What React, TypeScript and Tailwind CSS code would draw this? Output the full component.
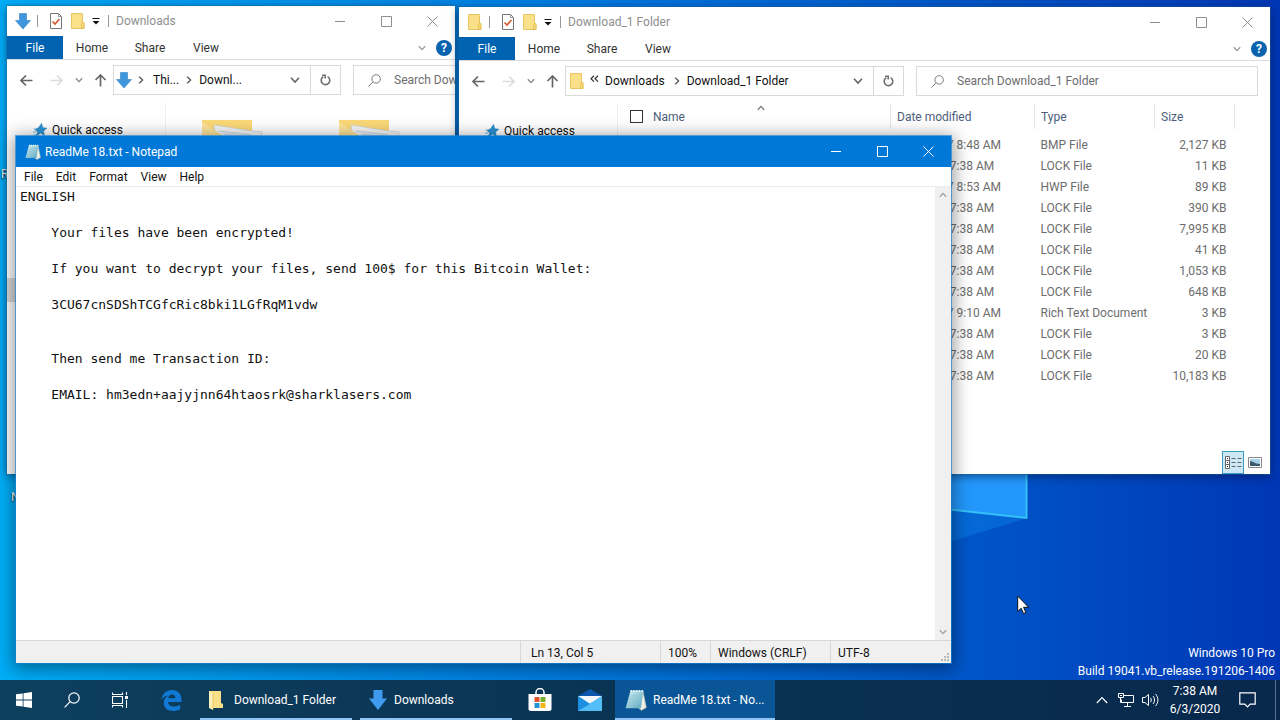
import type { ReactNode } from "react"

const files = [
  { date: "1/27/2017 8:48 AM", type: "BMP File", size: "2,127 KB" },
  { date: "6/3/2020 7:38 AM", type: "LOCK File", size: "11 KB" },
  { date: "1/27/2017 8:53 AM", type: "HWP File", size: "89 KB" },
  { date: "6/3/2020 7:38 AM", type: "LOCK File", size: "390 KB" },
  { date: "6/3/2020 7:38 AM", type: "LOCK File", size: "7,995 KB" },
  { date: "6/3/2020 7:38 AM", type: "LOCK File", size: "41 KB" },
  { date: "6/3/2020 7:38 AM", type: "LOCK File", size: "1,053 KB" },
  { date: "6/3/2020 7:38 AM", type: "LOCK File", size: "648 KB" },
  { date: "1/27/2017 9:10 AM", type: "Rich Text Document", size: "3 KB" },
  { date: "6/3/2020 7:38 AM", type: "LOCK File", size: "3 KB" },
  { date: "6/3/2020 7:38 AM", type: "LOCK File", size: "20 KB" },
  { date: "6/3/2020 7:38 AM", type: "LOCK File", size: "10,183 KB" },
]

const note = `ENGLISH

    Your files have been encrypted!

    If you want to decrypt your files, send 100$ for this Bitcoin Wallet:

    3CU67cnSDShTCGfcRic8bki1LGfRqM1vdw


    Then send me Transaction ID:

    EMAIL: hm3edn+aajyjnn64htaosrk@sharklasers.com`

const FolderIcon = () => (
  <svg width="14" height="16" viewBox="0 0 14 16">
    <path d="M.5.5h11v9l1.5.5v5.5H.5z" fill="#fbe08a" stroke="#e6c562" />
    <path d="M10.500 15v-4.500l1-1h1.500v6z" fill="#f8d775" stroke="#e0bb50" strokeWidth=".7" />
  </svg>
)

const DownIcon = () => (
  <svg width="16" height="17" viewBox="0 0 16 17">
    <path d="M4.500.5h7v7H15.500L8 16 .5 7.500h4z" fill="#3f96dc" stroke="#2f7fc4" strokeWidth=".6" />
  </svg>
)

const NotepadIcon = ({ className }: { className: string }) => (
  <svg className={className} viewBox="0 0 16 16">
    <defs>
      <linearGradient id="pad" x1="0" y1="0" x2="1" y2="1">
        <stop offset="0" stopColor="#d8f0f4" />
        <stop offset="1" stopColor="#58a6bc" />
      </linearGradient>
    </defs>
    <path d="M13 1.500 15.500 13.500 12 15.500 10 14z" fill="#eef0e6" stroke="#b9b9a5" strokeWidth=".5" />
    <path d="M4 1h9.500L11.500 14H.5z" fill="url(#pad)" />
    <path d="M4 1.500h9.500" stroke="#e9f6f6" strokeWidth="1.500" strokeDasharray="1 1" />
    <path d="M3.500 5h8.500M3 7.500h8.500M2.500 10h8.500" stroke="#8ec8d6" strokeWidth=".6" />
  </svg>
)

const Chevron = ({ className = "" }: { className?: string }) => (
  <svg className={className} width="8" height="8" viewBox="0 0 8 8" fill="none" stroke="currentColor" strokeWidth="1.300">
    <path d="M.8 2.200 4 5.600l3.200-3.400" />
  </svg>
)

const SearchIcon = ({ className }: { className: string }) => (
  <svg className={className} viewBox="0 0 16 16" fill="none" stroke="currentColor" strokeWidth="1.200">
    <circle cx="10" cy="6" r="5.200" />
    <path d="M6.200 9.700.6 15.400" />
  </svg>
)

const WindowButtons = () => (
  <div className="ml-auto flex h-full">
    <button aria-label="Minimize" className="flex w-[45px] items-center justify-center">
      <svg width="11" height="11" viewBox="0 0 11 11" stroke="currentColor"><path d="M0 5.500h10" /></svg>
    </button>
    <button aria-label="Maximize" className="flex w-[46px] items-center justify-center">
      <svg width="11" height="11" viewBox="0 0 11 11" fill="none" stroke="currentColor"><path d="M.5.5h10v10H.5z" /></svg>
    </button>
    <button aria-label="Close" className="flex w-[46px] items-center justify-center">
      <svg width="11" height="11" viewBox="0 0 11 11" stroke="currentColor"><path d="m.5.5 10 10m0-10-10 10" /></svg>
    </button>
  </div>
)

const Arrow = ({ className = "" }: { className?: string }) => (
  <svg className={className} width="13" height="13" viewBox="0 0 13 13" fill="none" stroke="currentColor" strokeWidth="1.700">
    <path d="M12.500 6.500H1.200M6 1.500l-5 5 5 5" />
  </svg>
)

type ExplorerProps = {
  title: string
  className: string
  icon: ReactNode
  crumbs: ReactNode
  search: string
  searchClass: string
  addressClass: string
  children: ReactNode
}

const Explorer = ({ title, className, icon, crumbs, search, searchClass, addressClass, children }: ExplorerProps) => (
  <section
    aria-label={title}
    className={`absolute flex flex-col overflow-hidden bg-white shadow-[0_0_0_1px_#1c6c9e66,0_2px_9px_#00143c99] ${className}`}
  >
    <header className="flex h-[30px] shrink-0 items-center pl-2 text-[#8e8e8e]">
      <span className="flex w-4 justify-center">{icon}</span>
      <span className="ml-1.5 h-3 w-px bg-[#999]" />
      <button aria-label="Properties" className="ml-3">
        <svg width="12" height="16" viewBox="0 0 12 16" fill="none">
          <path d="M.5.5h8l3 3v12H.5z" fill="#fff" stroke="#777" />
          <path d="M8.500.5v3h3" stroke="#999" />
          <path d="m2.500 8.500 2.500 2.500L9.500 6" stroke="#d4572c" strokeWidth="1.600" />
        </svg>
      </button>
      <button aria-label="New folder" className="ml-[9px]"><FolderIcon /></button>
      <button aria-label="Customize" className="ml-[7px] text-black">
        <svg width="8" height="7" viewBox="0 0 8 7"><path d="M.5.5h7" stroke="#111" /><path d="M.5 3h7L4 6.500z" fill="#111" /></svg>
      </button>
      <span className="ml-2 h-3 w-px bg-[#999]" />
      <h2 className="ml-[7px]">{title}</h2>
      <WindowButtons />
    </header>

    {/* Ribbon tabs */}
    <nav className="flex h-6 shrink-0 items-stretch border-b border-[#dadbdc] text-[#333]">
      <button className="w-14 bg-[#0063b1] text-white">File</button>
      <button className="w-[58px]">Home</button>
      <button className="w-[58px]">Share</button>
      <button className="w-[54px]">View</button>
      <button aria-label="Expand ribbon" className="ml-auto px-2.5 text-[#999]"><Chevron /></button>
      <button aria-label="Help" className="mr-[3px] flex items-center">
        <span className="flex size-4 items-center justify-center rounded-full bg-[#0b62ae] font-bold text-white">?</span>
      </button>
    </nav>

    {/* Address bar */}
    <div className="mt-[5px] flex h-[30px] shrink-0 items-stretch text-[#666]">
      <button aria-label="Back" className="ml-[13px]"><Arrow /></button>
      <button aria-label="Forward" className="ml-[17px] text-[#dcdcdc]"><Arrow className="rotate-180" /></button>
      <button aria-label="Recent locations" className="ml-3 text-[#888]"><Chevron /></button>
      <button aria-label="Up" className="ml-[11px]"><Arrow className="rotate-90" /></button>
      <div className={`ml-1.5 flex items-center border border-[#d9d9d9] text-[#111] ${addressClass}`}>
        {crumbs}
        <button aria-label="Previous locations" className="ml-auto mr-2.5 text-[#666]"><Chevron className="size-2.5" /></button>
        <button aria-label="Refresh" className="flex w-[30px] items-center justify-center self-stretch border-l border-[#d9d9d9] text-[#707070]">
          <svg width="11" height="12" viewBox="0 0 11 12" fill="none" stroke="currentColor" strokeWidth="1.600">
            <path d="M3.200 2.700A4.300 4.300 0 1 0 7.600 2.600M2 1.200h3.200v3.400" />
          </svg>
        </button>
      </div>
      <label className={`ml-3 flex items-center border border-[#d9d9d9] text-[#777] ${searchClass}`}>
        <SearchIcon className="ml-3.5 size-[13px] shrink-0" />
        <input
          type="search"
          aria-label={search}
          placeholder={search}
          className="ml-[13px] w-full min-w-0 outline-none placeholder:text-[#6d6d6d]"
        />
      </label>
    </div>
    <div className="mt-2 flex min-h-0 flex-1">{children}</div>
  </section>
)

const QuickAccess = () => (
  <a href="#quick-access" className="mt-[18px] flex h-[18px] items-center pl-[26px] text-[#111]">
    <svg width="14" height="14" viewBox="0 0 14 14" className="mr-[5px] shrink-0">
      <path d="m8.500.5 1.200 4.200 4 .6-3.200 2.600.8 4.600-3.600-2.400L3 13l1.700-4L2 6.500l3.700-1.800z" fill="#2b93d6" stroke="#1c78b8" strokeWidth=".6" />
      <path d="M.5 6h2M0 9h3M.5 12h2" stroke="#6db6e4" />
    </svg>
    Quick access
  </a>
)

const BigFolder = () => (
  <svg width="62" height="58" viewBox="0 0 62 58">
    <path d="M0 0h50v56H0z" fill="#fbd978" />
    <path d="m12 5 38 6 10 1-2 30H16z" fill="#f4f6f8" stroke="#cfd3d6" strokeWidth=".7" />
    <path d="m17 11 32 4M22 14l30 3" stroke="#b8c8d8" strokeWidth=".7" />
    <path d="m0 2 20 13 4 43H0z" fill="#fde49a" />
  </svg>
)

const DownloadsWindow = () => (
  <Explorer
    title="Downloads"
    className="left-[7px] top-1.5 bottom-[206px] w-[35%]"
    icon={<DownIcon />}
    search="Search Downloads"
    addressClass="w-[228px] shrink-0"
    searchClass="w-40 shrink-0"
    crumbs={
      <>
        <span className="ml-0.5"><DownIcon /></span>
        <Chevron className="ml-[5px] -rotate-90 text-[#555]" />
        <a href="#this-pc" className="ml-2">Thi...</a>
        <Chevron className="ml-1.5 -rotate-90 text-[#555]" />
        <a href="#downloads" className="ml-1.5">Downl...</a>
      </>
    }
  >
    <aside className="w-[159px] shrink-0 border-r border-[#f0f0f0]">
      <QuickAccess />
      <div className="mt-[139px] h-6 bg-[#d9d9d9]" />
    </aside>
    <div className="flex gap-[75px] pl-9 pt-[17px]">
      <BigFolder />
      <BigFolder />
    </div>
  </Explorer>
)

const FolderWindow = () => (
  <Explorer
    title="Download_1 Folder"
    className="left-[459px] right-2.5 top-[7px] bottom-[206px]"
    icon={<FolderIcon />}
    search="Search Download_1 Folder"
    addressClass="w-[339px] shrink-0"
    searchClass="mr-3 flex-1"
    crumbs={
      <>
        <span className="ml-1"><FolderIcon /></span>
        <svg width="9" height="8" viewBox="0 0 9 8" fill="none" stroke="#333" strokeWidth="1.200" className="mb-1 ml-1.5">
          <path d="M4 .8 1 3.700l3 3M8 .8 5 3.700l3 3" />
        </svg>
        <a href="#downloads" className="ml-1.5">Downloads</a>
        <Chevron className="ml-2 -rotate-90 text-[#555]" />
        <a href="#folder" className="ml-1.5">Download_1 Folder</a>
      </>
    }
  >
    <aside className="w-[159px] shrink-0 border-r border-[#f0f0f0]">
      <QuickAccess />
    </aside>
    <div className="flex min-w-0 flex-1 flex-col">
      <div className="pr-[35px]">
        <table className="w-full table-fixed border-collapse text-left text-[#6d6d6d]">
          <colgroup>
            <col />
            <col className="w-36" />
            <col className="w-[120px]" />
            <col className="w-20" />
          </colgroup>
          <thead className="text-[#4c607a]">
            <tr className="h-[25px]">
              <th className="relative border-r border-[#e5e5e5] p-0 font-normal">
                <Chevron className="absolute left-[139px] top-0 rotate-180 text-[#777]" />
                <div className="flex items-center gap-2.5 pl-3">
                  <input type="checkbox" aria-label="Select all" className="size-[13px] appearance-none border border-[#333] bg-white" />
                  Name
                </div>
              </th>
              <th className="border-r border-[#e5e5e5] p-0 pl-1.5 font-normal">Date modified</th>
              <th className="border-r border-[#e5e5e5] p-0 pl-1.5 font-normal">Type</th>
              <th className="border-r border-[#e5e5e5] p-0 pl-1.5 font-normal">Size</th>
            </tr>
          </thead>
          <tbody className="before:block before:h-[5px]">
            {files.map((file, i) => (
              <tr key={i} className="h-[21px] whitespace-nowrap">
                <td className="p-0" />
                <td className="p-0 pl-1.5">{file.date}</td>
                <td className="p-0 pl-1.5">{file.type}</td>
                <td className="p-0 pr-2 text-right">{file.size}</td>
              </tr>
            ))}
          </tbody>
        </table>
      </div>
      <div className="mt-auto flex items-center justify-end gap-1 pr-2">
        <button aria-label="Details view" className="flex h-[23px] w-[22px] items-center justify-center border border-[#3c9cc0] bg-[#cce8f6]">
          <svg width="17" height="13" viewBox="0 0 17 13" fill="none" stroke="#666">
            <path d="M.5.5h4v12h-4zM.5 4.500h4M.5 8.500h4" fill="#fff" />
            <path d="M6.500 2.500h4m2 0h4M6.500 6.500h4m2 0h4M6.500 10.500h4m2 0h4" />
            <path d="M2 2.500h1M2 6.500h1M2 10.500h1" stroke="#222" />
          </svg>
        </button>
        <button aria-label="Thumbnail view">
          <svg width="14" height="11" viewBox="0 0 14 11">
            <path d="M.5.5h13v10H.5z" fill="#fff" stroke="#888" />
            <path d="M2 2h10v7H2z" fill="#a8d0ea" />
            <path d="M2 4c3 0 5 3 10 3v2H2z" fill="#3d5b6c" />
          </svg>
        </button>
      </div>
    </div>
  </Explorer>
)

const NotepadWindow = () => (
  <section
    aria-label="Notepad"
    className="absolute bottom-[17px] left-4 right-[329px] top-[136px] flex flex-col bg-white shadow-[0_0_0_1px_#1883d7aa,0_3px_16px_3px_#00000066]"
  >
    <header className="flex h-[31px] shrink-0 items-center bg-[#0078d7] pl-[9px] text-white">
      <NotepadIcon className="size-4" />
      <h1 className="ml-1">ReadMe 18.txt - Notepad</h1>
      <WindowButtons />
    </header>
    <nav className="flex h-5 shrink-0 items-center gap-[13px] border-b border-[#ececec] pl-2 text-[#111]">
      <button>File</button>
      <button>Edit</button>
      <button>Format</button>
      <button>View</button>
      <button>Help</button>
    </nav>
    <div className="flex min-h-0 flex-1">
      <textarea
        readOnly
        aria-label="Document text"
        value={note}
        className="flex-1 resize-none overflow-hidden whitespace-pre pl-1 pt-px font-['DejaVu_Sans_Mono',monospace] text-[13px] leading-[18px] text-[#111] outline-none"
      />
      <div className="flex w-4 flex-col items-center justify-between bg-[#f0f0f0] py-1 text-[#a0a0a0]">
        <Chevron className="rotate-180" />
        <Chevron />
      </div>
    </div>
    <footer className="relative flex h-[23px] shrink-0 items-stretch justify-end border-t border-[#d7d7d7] bg-[#f0f0f0] leading-6 text-[#111]">
      <span className="w-[140px] border-l border-[#d7d7d7] pl-2.5">Ln 13, Col 5</span>
      <span className="w-[50px] border-l border-[#d7d7d7] pl-[7px]">100%</span>
      <span className="w-[120px] border-l border-[#d7d7d7] pl-[7px]">Windows (CRLF)</span>
      <span className="w-[121px] border-l border-[#d7d7d7] pl-[7px]">UTF-8</span>
      <svg className="absolute bottom-0.5 right-0.5" width="8" height="8" viewBox="0 0 8 8" fill="#b8b8b8">
        <path d="M6 0h2v2H6zM3 3h2v2H3zM6 3h2v2H6zM0 6h2v2H0zM3 6h2v2H3zM6 6h2v2H6z" />
      </svg>
    </footer>
  </section>
)

const Taskbar = () => (
  <footer className="flex h-10 shrink-0 items-stretch bg-linear-to-r from-[#0e3f5e] via-[#0a3352] to-[#08284c] text-white">
    <button aria-label="Start" className="flex w-12 items-center justify-center">
      <svg width="16" height="16" viewBox="0 0 16 16" fill="#fff">
        <path d="M0 2.300 6.700 1.400v6.200H0zM7.500 1.300 16 0v7.600H7.500zM0 8.400h6.700v6.200L0 13.700zM7.500 8.400H16V16l-8.500-1.200z" />
      </svg>
    </button>
    <button aria-label="Search" className="flex w-12 items-center justify-center"><SearchIcon className="size-4" /></button>
    <button aria-label="Task view" className="flex w-12 items-center justify-center">
      <svg width="17" height="16" viewBox="0 0 17 16" fill="none" stroke="#fff" strokeWidth="1.100">
        <path d="M.5.5v2h10v-2M.5 4.500h10v7H.5zM.5 15.500v-2h10v2M14.500 0v3M14.500 8v8" />
        <path d="M13 4h3v3h-3z" fill="#fff" stroke="none" />
      </svg>
    </button>
    <button aria-label="Edge" className="ml-0.5 flex w-[54px] items-center justify-center pr-1">
      <svg width="21" height="21" viewBox="0 0 21 21">
        <path d="M.5 9.500C1.500 3.500 5.500 0 11 0c6 0 9.500 4.300 9.500 9.500V12H7c.3 3.200 3 4.500 6.200 4.500 2.300 0 4.300-.7 6-1.700v4.400c-2 1.200-4.600 1.800-7.200 1.800C6.500 21 2.800 17.500 2.800 13c0-3.200 1.700-5.800 4.300-7.400C4.500 5.900 2 7.300.5 9.500zM7.200 8.300h7.200c0-2.500-1.300-3.700-3.400-3.700s-3.500 1.400-3.800 3.700z" fill="#1179d4" />
      </svg>
    </button>
    <button className="flex w-[152px] items-center border-b-2 border-[#8fc4f4] pl-[9px] pt-0.5">
      <svg width="14" height="20" viewBox="0 0 14 20">
        <path d="M0 1h12v12l2 1v4H0z" fill="#fbdf87" />
        <path d="m0 1 4 3v16l-4-2z" fill="#fff0b8" />
        <path d="M4 4v16" stroke="#d9b24c" strokeWidth=".6" />
      </svg>
      <span className="ml-[11px]">Download_1 Folder</span>
    </button>
    <button className="ml-2 flex w-[152px] items-center border-b-2 border-[#8fc4f4] pl-[9px] pt-0.5">
      <svg width="18" height="20" viewBox="0 0 18 20"><path d="M4.500 0h9v8.500H18L9 20 0 8.500h4.500z" fill="#3f9bf0" /></svg>
      <span className="ml-[7px]">Downloads</span>
    </button>
    <button aria-label="Store" className="ml-1 flex w-12 items-center justify-center">
      <svg width="24" height="24" viewBox="0 0 24 24">
        <path d="M8 7V4.500a4 4 0 0 1 8 0V7" fill="none" stroke="#fff" strokeWidth="1.500" />
        <path d="M.5 6h23v15.500L22 23H2L.5 21.500z" fill="#fff" />
        <path d="M6.500 9h5v5h-5z" fill="#e0532d" />
        <path d="M12.500 9h5v5h-5z" fill="#7aae28" />
        <path d="M6.500 15h5v5h-5z" fill="#2394d4" />
        <path d="M12.500 15h5v5h-5z" fill="#f5b51d" />
      </svg>
    </button>
    <button aria-label="Mail" className="ml-0.5 flex w-12 items-center justify-center">
      <svg width="24" height="22" viewBox="0 0 24 22">
        <path d="M0 7 12 0l12 7v4H0z" fill="#0a57ad" />
        <path d="M0 7h24v15H0z" fill="#2ba4ee" />
        <path d="M0 7h24l-12 8z" fill="#f2f8fc" />
        <path d="m0 22 24-15v15z" fill="#53bdf7" />
        <path d="m12 15 3-2L0 22V7z" fill="#1d8fe0" />
      </svg>
    </button>
    <button className="ml-px flex w-40 items-center border-b-2 border-[#8fc4f4] bg-[#0a5596] pl-2.5 pt-0.5">
      <NotepadIcon className="size-[22px]" />
      <span className="ml-1.5">ReadMe 18.txt - No...</span>
    </button>

    {/* System tray */}
    <div className="ml-auto flex items-center">
      <button aria-label="Hidden icons">
        <svg width="12" height="8" viewBox="0 0 12 8" fill="none" stroke="#fff" strokeWidth="1.200"><path d="m.8 7 5.200-5.500L11.200 7" /></svg>
      </button>
      <button aria-label="Network" className="ml-2.5">
        <svg width="16" height="14" viewBox="0 0 16 14" fill="none" stroke="#fff">
          <path d="M5.500 2.500h10v7h-12v-3M9.500 9.500v4M6 13.500h7M.5.5h5v4h-5zM2.500 4.500v5h1" />
          <path d="M2 2.500h2" />
        </svg>
      </button>
      <button aria-label="Volume" className="ml-2">
        <svg width="17" height="14" viewBox="0 0 17 14" fill="none" stroke="#fff">
          <path d="M.5 4.500h2.500L6.500 1.500v11L3 9.500H.5zM8.500 4.800c1 1.300 1 3.100 0 4.400M11 3c2 2.300 2 5.700 0 8M13.500 1c3.200 3.600 3.200 8.400 0 12" />
        </svg>
      </button>
      <button className="ml-0.5 w-[68px] text-center leading-[18px]">
        <time className="block">7:38 AM</time>
        <time className="block">6/3/2020</time>
      </button>
      <button aria-label="Notifications" className="ml-2.5">
        <svg width="17" height="16" viewBox="0 0 17 16" fill="none" stroke="#fff" strokeWidth="1.200"><path d="M.8.8h15.400v11.400h-5L8.500 15l-2.700-2.800h-5z" /></svg>
      </button>
      <span className="ml-[19px] mr-1 h-10 w-px bg-[#57718c]" />
    </div>
  </footer>
)

const App = () => {
  return (
    <div className="flex h-screen flex-col overflow-hidden font-['Roboto',sans-serif] text-[12px] leading-4">
      <main className="relative min-h-0 flex-1 overflow-hidden bg-linear-to-r from-[#00aef8] via-[#007ae0] via-45% to-[#0036b4]">
        <svg className="absolute left-0 top-0 size-full" viewBox="0 0 1280 680" preserveAspectRatio="none">
          <path d="M940 508 1027 518 940 545z" fill="#0a7be4" opacity=".5" />
          <path d="M900 430h127v88l-127-14z" fill="#2397fb" />
          <path d="M1026.500 430v88L900 504" fill="none" stroke="#34c1f8" strokeWidth="2" />
        </svg>
        <span className="absolute left-px top-[166px] text-white text-shadow-[0_1px_2px_#000]">R</span>
        <span className="absolute left-[11px] top-[489px] text-white text-shadow-[0_1px_2px_#000]">N</span>
        <p className="absolute bottom-0 right-[5px] text-right leading-[18px] text-white">
          Windows 10 Pro
          <br />
          Build 19041.vb_release.191206-1406
        </p>
        <DownloadsWindow />
        <FolderWindow />
        <NotepadWindow />
        <svg className="absolute left-[1017px] top-[595px]" width="13" height="20" viewBox="0 0 13 20">
          <path d="M.7 1v15.500l3.500-3.300 2.300 5.300 2.400-1-2.300-5.200h5z" fill="#fff" stroke="#111" />
        </svg>
      </main>
      <Taskbar />
    </div>
  )
}

export default App
